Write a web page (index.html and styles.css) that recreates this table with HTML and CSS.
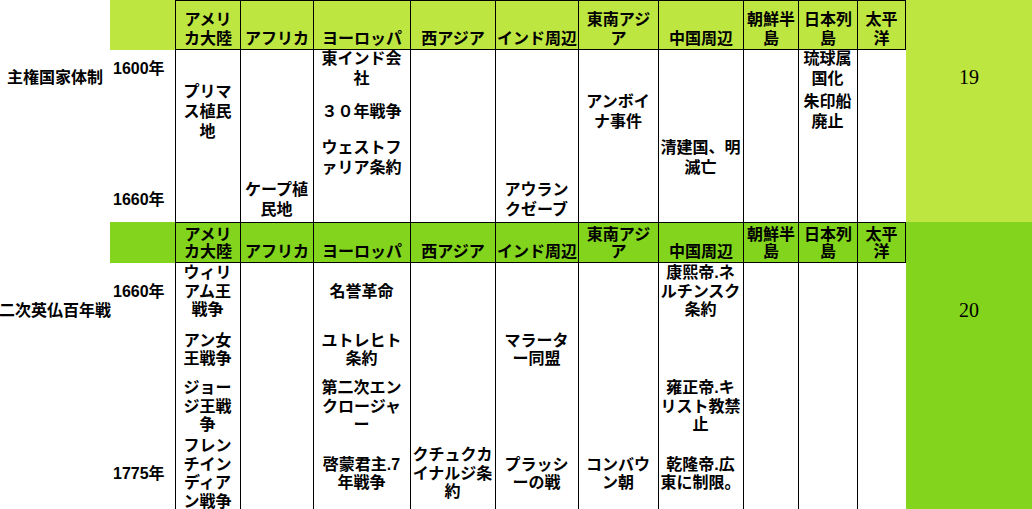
FILE: index.html
```html
<!DOCTYPE html>
<html lang="ja">
<head>
<meta charset="utf-8">
<title>年表</title>
<link rel="stylesheet" href="styles.css">
</head>
<body>
<div class="sheet">
  <section class="sec sec1">
    <div class="label">主権国家体制</div>
    <div class="yearhead"></div>
    <div class="hd c3">アメリ<br>カ大陸</div>
    <div class="hd c4">アフリカ</div>
    <div class="hd c5">ヨーロッパ</div>
    <div class="hd c6">西アジア</div>
    <div class="hd c7">インド周辺</div>
    <div class="hd c8">東南アジ<br>ア</div>
    <div class="hd c9">中国周辺</div>
    <div class="hd c10">朝鮮半<br>島</div>
    <div class="hd c11">日本列<br>島</div>
    <div class="hd c12">太平<br>洋</div>
    <div class="col c3"></div>
    <div class="col c4"></div>
    <div class="col c5"></div>
    <div class="col c6"></div>
    <div class="col c7"></div>
    <div class="col c8"></div>
    <div class="col c9"></div>
    <div class="col c10"></div>
    <div class="col c11"></div>
    <div class="col c12"></div>
    <div class="year r2">1600年</div>
    <div class="year r5">1660年</div>
    <div class="item c3 r3">プリマ<br>ス植民<br>地</div>
    <div class="item c4 r5">ケープ植<br>民地</div>
    <div class="item c5 r2">東インド会<br>社</div>
    <div class="item c5 r3">３０年戦争</div>
    <div class="item c5 r4">ウェストフ<br>ァリア条約</div>
    <div class="item c7 r5">アウラン<br>クゼーブ</div>
    <div class="item c8 r3">アンボイ<br>ナ事件</div>
    <div class="item c9 r4">清建国、明<br>滅亡</div>
    <div class="item c11 r2">琉球属<br>国化</div>
    <div class="item c11 r3">朱印船<br>廃止</div>
    <div class="num">19</div>
  </section>
  <section class="sec sec2">
    <div class="label">二次英仏百年戦</div>
    <div class="yearhead"></div>
    <div class="hd c3">アメリ<br>カ大陸</div>
    <div class="hd c4">アフリカ</div>
    <div class="hd c5">ヨーロッパ</div>
    <div class="hd c6">西アジア</div>
    <div class="hd c7">インド周辺</div>
    <div class="hd c8">東南アジ<br>ア</div>
    <div class="hd c9">中国周辺</div>
    <div class="hd c10">朝鮮半<br>島</div>
    <div class="hd c11">日本列<br>島</div>
    <div class="hd c12">太平<br>洋</div>
    <div class="col c3"></div>
    <div class="col c4"></div>
    <div class="col c5"></div>
    <div class="col c6"></div>
    <div class="col c7"></div>
    <div class="col c8"></div>
    <div class="col c9"></div>
    <div class="col c10"></div>
    <div class="col c11"></div>
    <div class="col c12"></div>
    <div class="year r2">1660年</div>
    <div class="year r5">1775年</div>
    <div class="item c3 r2">ウィリ<br>アム王<br>戦争</div>
    <div class="item c3 r3">アン女<br>王戦争</div>
    <div class="item c3 r4">ジョー<br>ジ王戦<br>争</div>
    <div class="item c3 r5">フレン<br>チイン<br>ディア<br>ン戦争</div>
    <div class="item c5 r2">名誉革命</div>
    <div class="item c5 r3">ユトレヒト<br>条約</div>
    <div class="item c5 r4">第二次エン<br>クロージャ<br>ー</div>
    <div class="item c5 r5">啓蒙君主.7<br>年戦争</div>
    <div class="item c6 r5">クチュクカ<br>イナルジ条<br>約</div>
    <div class="item c7 r3">マラータ<br>ー同盟</div>
    <div class="item c7 r5">プラッシ<br>ーの戦</div>
    <div class="item c8 r5">コンバウ<br>ン朝</div>
    <div class="item c9 r2">康熙帝.ネ<br>ルチンスク<br>条約</div>
    <div class="item c9 r4">雍正帝.キ<br>リスト教禁<br>止</div>
    <div class="item c9 r5">乾隆帝.広<br>東に制限。</div>
    <div class="num">20</div>
  </section>
</div>
</body>
</html>
```

FILE: styles.css
```css
html, body {
  margin: 0;
  padding: 0;
  background: #fff;
  overflow: hidden;
}

.sheet {
  width: 1032px;
  font-family: "Liberation Sans", "Noto Sans CJK JP", sans-serif;
  font-weight: 700;
  font-size: 16px;
  color: #000;
}

.sec {
  display: grid;
  grid-template-columns: 110px 65px 65px 73px 97px 85px 83px 80px 85px 55px 59px 49px 126px;
}

.sec1 {
  --green: #bee640;
  grid-template-rows: 50px 37px 50px 41px 44px;
  line-height: 20px;
}

.sec2 {
  --green: #82d41c;
  grid-template-rows: 41px 58px 58px 56px 78px;
  line-height: 18.5px;
}

.label {
  grid-column: 1;
  grid-row: 1 / -1;
  display: flex;
  justify-content: center;
  white-space: nowrap;
  line-height: 20px;
}

.sec1 .label { padding-top: 68px; }
.sec2 .label { padding-top: 79px; }

.yearhead {
  grid-column: 2;
  grid-row: 1;
  background: var(--green);
}

.hd {
  grid-row: 1;
  background: var(--green);
  border-top: 1px solid #000;
  border-left: 1px solid #000;
  border-bottom: 1px solid #000;
  display: flex;
  flex-direction: column;
  justify-content: flex-end;
  align-items: center;
  text-align: center;
  white-space: nowrap;
  padding-bottom: 1px;
  line-height: 19px;
}

.sec2 .hd {
  line-height: 17px;
  padding-bottom: 2px;
}

.hd.c12 { border-right: 1px solid #000; }

.col {
  grid-row: 2 / -1;
  border-left: 1px solid #000;
  background: #fff;
}

.item {
  align-self: center;
  justify-self: center;
  text-align: center;
  white-space: nowrap;
}

.year {
  grid-column: 2;
  align-self: center;
  padding-left: 3px;
  white-space: nowrap;
  line-height: 20px;
}

.num {
  grid-column: 13;
  grid-row: 1 / -1;
  background: var(--green);
  font-family: "Liberation Serif", serif;
  font-weight: 400;
  font-size: 20px;
  line-height: 20px;
  text-align: center;
}

.sec1 .num { padding-top: 67px; }
.sec2 .num { padding-top: 78px; }

.c3 { grid-column: 3; }
.c4 { grid-column: 4; }
.c5 { grid-column: 5; }
.c6 { grid-column: 6; }
.c7 { grid-column: 7; }
.c8 { grid-column: 8; }
.c9 { grid-column: 9; }
.c10 { grid-column: 10; }
.c11 { grid-column: 11; }
.c12 { grid-column: 12; }

.r2 { grid-row: 2; }
.r3 { grid-row: 3; }
.r4 { grid-row: 4; }
.r5 { grid-row: 5; }
```
